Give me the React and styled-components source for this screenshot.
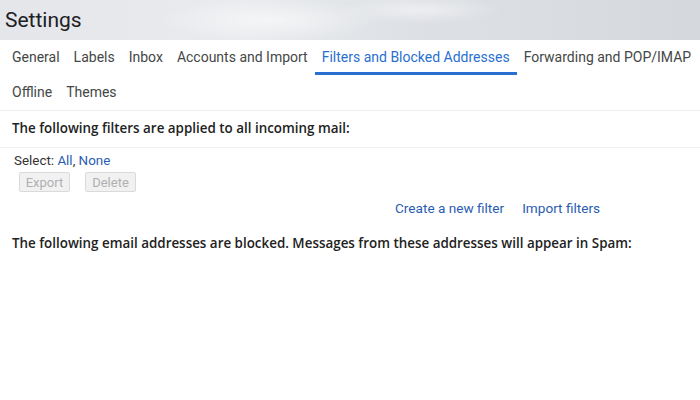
import React from 'react';
import styled, { createGlobalStyle } from 'styled-components';

const GlobalStyle = createGlobalStyle`
  html, body {
    margin: 0;
    padding: 0;
    background: #ffffff;
    font-family: Roboto, 'Liberation Sans', sans-serif;
  }
`;

const Page = styled.div`
  width: 700px;
  height: 400px;
  overflow: hidden;
  background: #ffffff;
`;

const Header = styled.header`
  height: 40px;
  display: flex;
  align-items: center;
  padding-left: 5px;
  background:
    radial-gradient(ellipse 160px 30px at 270px 20px, rgba(255, 255, 255, 0.55), transparent 70%),
    radial-gradient(ellipse 120px 20px at 420px 10px, rgba(255, 255, 255, 0.45), transparent 70%),
    linear-gradient(90deg, #e4e6ea 0%, #e9ebee 35%, #dde0e4 60%, #d5d8dd 100%);
`;

const Title = styled.h1`
  margin: 0;
  font-size: 21px;
  font-weight: 400;
  color: #202124;
`;

const TabBar = styled.nav`
  padding: 0 0 0 5px;
  border-bottom: 1px solid #eceef0;
`;

const TabRow = styled.div`
  display: flex;
`;

const Tab = styled.a`
  display: block;
  height: 35px;
  line-height: 35px;
  padding: 0 7px;
  font-size: 14px;
  color: ${p => (p.$active ? '#2a6fd0' : '#444746')};
  box-sizing: border-box;
  border-bottom: 3px solid ${p => (p.$active ? '#2a6fd0' : 'transparent')};
  white-space: nowrap;
  cursor: pointer;
`;

const Section = styled.section`
  padding: 0 12px;
`;

const Heading = styled.div`
  font-family: 'Open Sans', Roboto, sans-serif;
  font-size: 13.4px;
  font-weight: 600;
  color: #222;
`;

const FiltersHeading = styled(Heading)`
  margin: 0 -12px;
  padding: 8px 12px 10px;
  border-bottom: 1px solid #eef0f2;
`;

const SelectRow = styled.div`
  font-size: 13.4px;
  color: #333;
  padding: 5px 2px 0;
`;

const Link = styled.span`
  color: #2a5db0;
  cursor: pointer;
`;

const Buttons = styled.div`
  display: flex;
  gap: 15px;
  padding: 4px 0 0 7px;
`;

const Btn = styled.button`
  height: 20px;
  padding: 0 5px;
  font-family: Roboto, 'Liberation Sans', sans-serif;
  font-size: 13px;
  color: #b0b0b0;
  background: #f1f1f1;
  border: 1px solid #dadada;
  border-radius: 2px;
  min-width: 51px;
`;

const Actions = styled.div`
  display: flex;
  gap: 18px;
  padding: 8px 0 0 383px;
  font-size: 13.6px;
`;

const BlockedHeading = styled(Heading)`
  padding-top: 18px;
`;

const tabRows = [
  ['General', 'Labels', 'Inbox', 'Accounts and Import', 'Filters and Blocked Addresses', 'Forwarding and POP/IMAP'],
  ['Offline', 'Themes'],
];

export default function App() {
  return (
    <Page>
      <GlobalStyle />
      <Header>
        <Title>Settings</Title>
      </Header>
      <TabBar>
        {tabRows.map((row, i) => (
          <TabRow key={i}>
            {row.map(t => (
              <Tab key={t} $active={t === 'Filters and Blocked Addresses'}>
                {t}
              </Tab>
            ))}
          </TabRow>
        ))}
      </TabBar>
      <Section>
        <FiltersHeading>
          The following filters are applied to all incoming mail:
        </FiltersHeading>
        <SelectRow>
          Select: <Link>All</Link>, <Link>None</Link>
        </SelectRow>
        <Buttons>
          <Btn disabled>Export</Btn>
          <Btn disabled>Delete</Btn>
        </Buttons>
        <Actions>
          <Link>Create a new filter</Link>
          <Link>Import filters</Link>
        </Actions>
        <BlockedHeading>
          The following email addresses are blocked. Messages from these addresses will appear in Spam:
        </BlockedHeading>
      </Section>
    </Page>
  );
}
